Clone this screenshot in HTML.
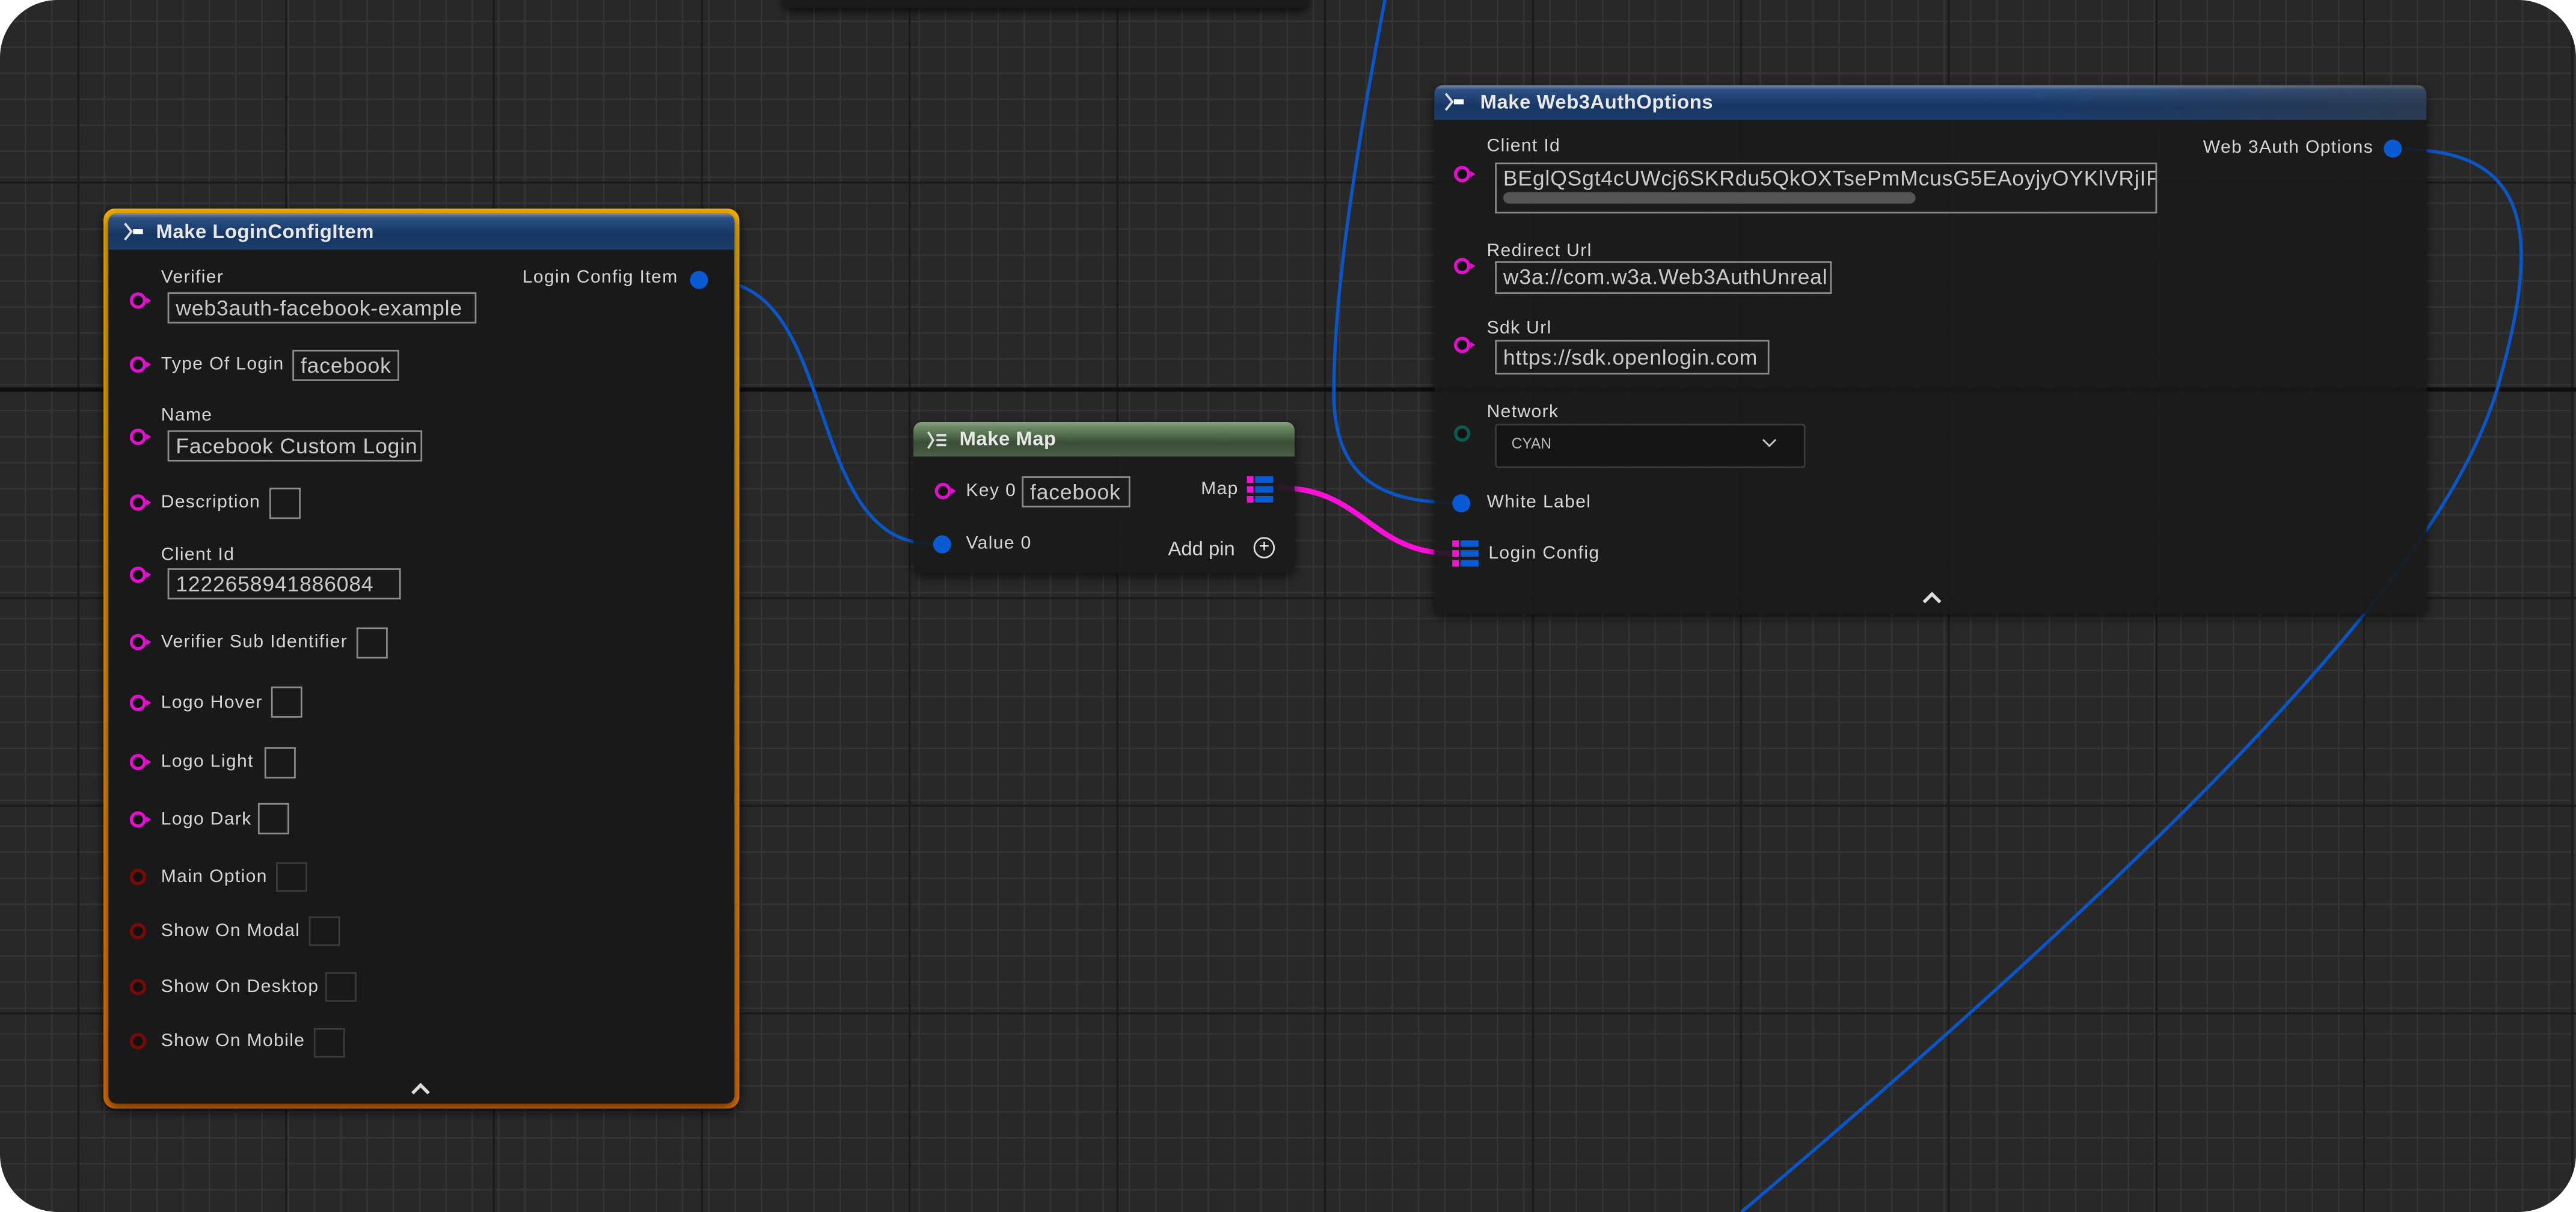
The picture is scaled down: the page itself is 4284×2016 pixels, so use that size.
<!DOCTYPE html>
<html><head><meta charset="utf-8"><style>
html,body{margin:0;padding:0;background:#fff;width:4284px;height:2016px;overflow:hidden}
#s{position:absolute;left:0;top:0;width:1568px;height:738px;transform:scale(2.73214,2.73171);transform-origin:0 0;font-family:"Liberation Sans",sans-serif}
#bg{position:absolute;inset:0;border-radius:35px;overflow:hidden;background-color:#282828;
background-image:
linear-gradient(to bottom,transparent 236px,#0e0e0e 236px,#0e0e0e 238.5px,transparent 238.5px),
repeating-linear-gradient(to right,transparent 0,transparent 47px,#1b1b1b 47px,#1b1b1b 48.3px,transparent 48.3px,transparent 126.5px),
repeating-linear-gradient(to bottom,transparent 0,transparent 110.5px,#1b1b1b 110.5px,#1b1b1b 111.8px,transparent 111.8px,transparent 126.5px),
repeating-linear-gradient(to right,transparent 0,transparent 15px,#343434 15px,#343434 16px),
repeating-linear-gradient(to bottom,transparent 0,transparent 12.5px,#343434 12.5px,#343434 13.5px,transparent 13.5px,transparent 15.81px);}
.node{position:absolute;background:rgba(24,25,24,0.9);border-radius:5px;box-shadow:0 2px 6px rgba(0,0,0,.6)}
.hdr{position:absolute;left:0;right:0;top:0;border-radius:5px 5px 0 0;color:#e8e8e8;font-size:12px;font-weight:bold;letter-spacing:0.2px}
.blue{background:linear-gradient(to bottom,#7d8fa3 0,#2c5186 12%,#163563 60%,#1b3d6b 100%)}
.lbl{position:absolute;color:#d6d6d6;font-size:11px;white-space:nowrap;letter-spacing:0.5px}
.box{position:absolute;border:1px solid #8c8c8c;color:#cacaca;font-size:13px;line-height:17px;padding-left:4px;white-space:nowrap;overflow:hidden;box-sizing:border-box;letter-spacing:0.3px}
.ebox{position:absolute;width:19px;height:19px;border:1px solid #8c8c8c;box-sizing:border-box}
.dbox{position:absolute;width:19px;height:18px;border:1px solid #3c3c3c;box-sizing:border-box}
.pin{position:absolute;width:10px;height:10px;border-radius:50%;box-sizing:border-box;border:2px solid #e010cc;background:#111}
.pin.r{border-color:#7a0a0a}
.pin.t{border-color:#0b5a52}
.pin.b{background:#0a5ad4;border:none;width:11px;height:11px}
.arr{position:absolute;width:0;height:0;border-top:2px solid transparent;border-bottom:2px solid transparent;border-left:3px solid #e010cc}
.chev{position:absolute;width:6px;height:6px;border-left:2px solid #ddd;border-top:2px solid #ddd;transform:rotate(45deg)}
.mapi{position:absolute;width:16px;height:17px}
.mapi i{position:absolute;left:0;width:4px;height:4px;background:#ff10d8}
.mapi b{position:absolute;left:5px;width:11px;height:4px;background:#0a5ad4}
.ico{position:absolute;width:14px;height:12px}
</style></head><body>
<div id="s">
<div id="bg"></div>

<div style="position:absolute;left:477px;top:-6px;width:319px;height:11px;background:#191a19;border-radius:0 0 4px 4px;box-shadow:0 2px 5px rgba(0,0,0,.7)"></div>

<svg width="1568" height="738" style="position:absolute;left:0;top:0" fill="none">
<path d="M433,171 C512,171 488,331 567,331" stroke="#0a56c8" stroke-width="2"/>
<path d="M843,0 C822,110 811,190 812,245 C814,290 840,306 885,306" stroke="#0a56c8" stroke-width="2"/>
<path d="M1464,91 C1545,92 1545,150 1520,237 C1495,320 1400,450 1060,738" stroke="#0a56c8" stroke-width="2"/>
<path d="M778,297 C830,297 834,337 884,337" stroke="#ff10d8" stroke-width="3.2"/>
</svg>

<div style="position:absolute;left:63px;top:127px;width:387px;height:548px;border-radius:7px;background:linear-gradient(#f2b000,#e07000);box-shadow:0 2px 6px rgba(0,0,0,.6)"></div>
<div class="node" style="left:66px;top:130px;width:381px;height:542px;border-radius:5px;background:#181918">
 <div class="hdr blue" style="height:22px">
  <svg class="ico" style="left:9px;top:5px" viewBox="0 0 14 12"><path d="M1,1 L5,6 L1,11" stroke="#ddd" stroke-width="1.4" fill="none"/><rect x="6" y="4.5" width="6" height="3" fill="#fff"/></svg>
  <span style="position:absolute;left:29px;top:4px">Make LoginConfigItem</span>
 </div>
</div>
<div class="lbl" style="left:98px;top:163px">Verifier</div>
<div class="pin" style="left:79px;top:178px"></div><div class="arr" style="left:89px;top:181px"></div>
<div class="box" style="left:102px;top:178px;width:188px;height:19px">web3auth-facebook-example</div>
<div class="lbl" style="left:318px;top:163px">Login Config Item</div>
<div class="pin b" style="left:420px;top:165px"></div>

<div class="pin" style="left:79px;top:217px"></div><div class="arr" style="left:89px;top:220px"></div>
<div class="lbl" style="left:98px;top:216px">Type Of Login</div>
<div class="box" style="left:178px;top:213px;width:65px;height:19px">facebook</div>

<div class="lbl" style="left:98px;top:247px">Name</div>
<div class="pin" style="left:79px;top:261px"></div><div class="arr" style="left:89px;top:264px"></div>
<div class="box" style="left:102px;top:262px;width:155px;height:19px">Facebook Custom Login</div>

<div class="pin" style="left:79px;top:301px"></div><div class="arr" style="left:89px;top:304px"></div>
<div class="lbl" style="left:98px;top:300px">Description</div>
<div class="ebox" style="left:164px;top:297px"></div>

<div class="lbl" style="left:98px;top:332px">Client Id</div>
<div class="pin" style="left:79px;top:345px"></div><div class="arr" style="left:89px;top:348px"></div>
<div class="box" style="left:102px;top:346px;width:142px;height:19px">1222658941886084</div>

<div class="pin" style="left:79px;top:386px"></div><div class="arr" style="left:89px;top:389px"></div>
<div class="lbl" style="left:98px;top:385px">Verifier Sub Identifier</div>
<div class="ebox" style="left:217px;top:382px"></div>

<div class="pin" style="left:79px;top:423px"></div><div class="arr" style="left:89px;top:426px"></div>
<div class="lbl" style="left:98px;top:422px">Logo Hover</div>
<div class="ebox" style="left:165px;top:418px"></div>

<div class="pin" style="left:79px;top:459px"></div><div class="arr" style="left:89px;top:462px"></div>
<div class="lbl" style="left:98px;top:458px">Logo Light</div>
<div class="ebox" style="left:161px;top:455px"></div>

<div class="pin" style="left:79px;top:494px"></div><div class="arr" style="left:89px;top:497px"></div>
<div class="lbl" style="left:98px;top:493px">Logo Dark</div>
<div class="ebox" style="left:157px;top:489px"></div>

<div class="pin r" style="left:79px;top:529px"></div>
<div class="lbl" style="left:98px;top:528px">Main Option</div>
<div class="dbox" style="left:168px;top:525px"></div>

<div class="pin r" style="left:79px;top:562px"></div>
<div class="lbl" style="left:98px;top:561px">Show On Modal</div>
<div class="dbox" style="left:188px;top:558px"></div>

<div class="pin r" style="left:79px;top:596px"></div>
<div class="lbl" style="left:98px;top:595px">Show On Desktop</div>
<div class="dbox" style="left:198px;top:592px"></div>

<div class="pin r" style="left:79px;top:629px"></div>
<div class="lbl" style="left:98px;top:628px">Show On Mobile</div>
<div class="dbox" style="left:191px;top:626px"></div>
<div class="chev" style="left:252px;top:661px"></div>

<div class="node" style="left:556px;top:257px;width:232px;height:92px">
 <div class="hdr" style="height:21px;background:linear-gradient(to bottom,#8aa184 0,#6b8a63 15%,#3a4d37 60%,#4b6046 100%)">
  <svg class="ico" style="left:8px;top:5px" viewBox="0 0 14 12"><path d="M1,1 L4,6 L1,11" stroke="#ddd" stroke-width="1.3" fill="none"/><path d="M6,3H12M6,6H12M6,9H12" stroke="#ddd" stroke-width="1.4"/></svg>
  <span style="position:absolute;left:28px;top:3px;font-size:12px">Make Map</span>
 </div>
</div>
<div class="pin" style="left:569px;top:294px"></div><div class="arr" style="left:579px;top:297px"></div>
<div class="lbl" style="left:588px;top:293px">Key 0</div>
<div class="box" style="left:622px;top:290px;width:66px;height:19px">facebook</div>
<div class="lbl" style="left:731px;top:292px">Map</div>
<div class="mapi" style="left:759px;top:290px"><i style="top:0"></i><b style="top:0"></b><i style="top:6px"></i><b style="top:6px"></b><i style="top:12px"></i><b style="top:12px"></b></div>
<div class="pin b" style="left:568px;top:326px"></div>
<div class="lbl" style="left:588px;top:325px">Value 0</div>
<div class="lbl" style="left:711px;top:327px;font-size:12px;letter-spacing:0">Add pin</div>
<div style="position:absolute;left:763px;top:327px;width:13px;height:13px;border:1.3px solid #ddd;border-radius:50%;box-sizing:border-box;color:#fff;font-size:11px;line-height:10px;text-align:center">+</div>

<div class="node" style="left:873px;top:52px;width:604px;height:322px">
 <div class="hdr blue" style="height:21px;background:linear-gradient(to right,rgba(0,0,0,0) 60%,rgba(60,60,60,.5)),linear-gradient(to bottom,#7d8fa3 0,#2c5186 12%,#163563 60%,#1b3d6b 100%)">
  <svg class="ico" style="left:6px;top:4px" viewBox="0 0 14 12"><path d="M1,1 L5,6 L1,11" stroke="#ddd" stroke-width="1.4" fill="none"/><rect x="6" y="4.5" width="6" height="3" fill="#fff"/></svg>
  <span style="position:absolute;left:28px;top:3px">Make Web3AuthOptions</span>
 </div>
</div>
<div class="lbl" style="left:905px;top:83px">Client Id</div>
<div class="pin" style="left:885px;top:101px"></div><div class="arr" style="left:895px;top:104px"></div>
<div class="box" style="left:910px;top:99px;width:403px;height:31px;line-height:17px;letter-spacing:0.3px">BEglQSgt4cUWcj6SKRdu5QkOXTsePmMcusG5EAoyjyOYKlVRjIF1i</div>
<div style="position:absolute;left:915px;top:117px;width:251px;height:7px;border-radius:4px;background:#555"></div>
<div class="lbl" style="left:1341px;top:84px">Web 3Auth Options</div>
<div class="pin b" style="left:1451px;top:85px"></div>

<div class="lbl" style="left:905px;top:147px">Redirect Url</div>
<div class="pin" style="left:885px;top:157px"></div><div class="arr" style="left:895px;top:160px"></div>
<div class="box" style="left:910px;top:159px;width:205px;height:20px">w3a://com.w3a.Web3AuthUnreal</div>

<div class="lbl" style="left:905px;top:194px">Sdk Url</div>
<div class="pin" style="left:885px;top:205px"></div><div class="arr" style="left:895px;top:208px"></div>
<div class="box" style="left:910px;top:207px;width:167px;height:21px;line-height:19px">https://sdk.openlogin.com</div>

<div class="lbl" style="left:905px;top:245px">Network</div>
<div class="pin t" style="left:885px;top:259px"></div>
<div style="position:absolute;left:910px;top:258px;width:189px;height:27px;background:#151515;border:1px solid #3a3a3a;box-sizing:border-box;border-radius:2px"></div>
<div class="lbl" style="left:920px;top:265px;font-size:9px;color:#bbb;letter-spacing:0">CYAN</div>
<div style="position:absolute;left:1074px;top:265px;width:5px;height:5px;border-right:1.5px solid #ccc;border-bottom:1.5px solid #ccc;transform:rotate(45deg)"></div>

<div class="pin b" style="left:884px;top:301px"></div>
<div class="lbl" style="left:905px;top:300px">White Label</div>
<div class="mapi" style="left:884px;top:329px"><i style="top:0"></i><b style="top:0"></b><i style="top:6px"></i><b style="top:6px"></b><i style="top:12px"></i><b style="top:12px"></b></div>
<div class="lbl" style="left:906px;top:331px">Login Config</div>
<div class="chev" style="left:1172px;top:362px"></div>
</div>
</body></html>
